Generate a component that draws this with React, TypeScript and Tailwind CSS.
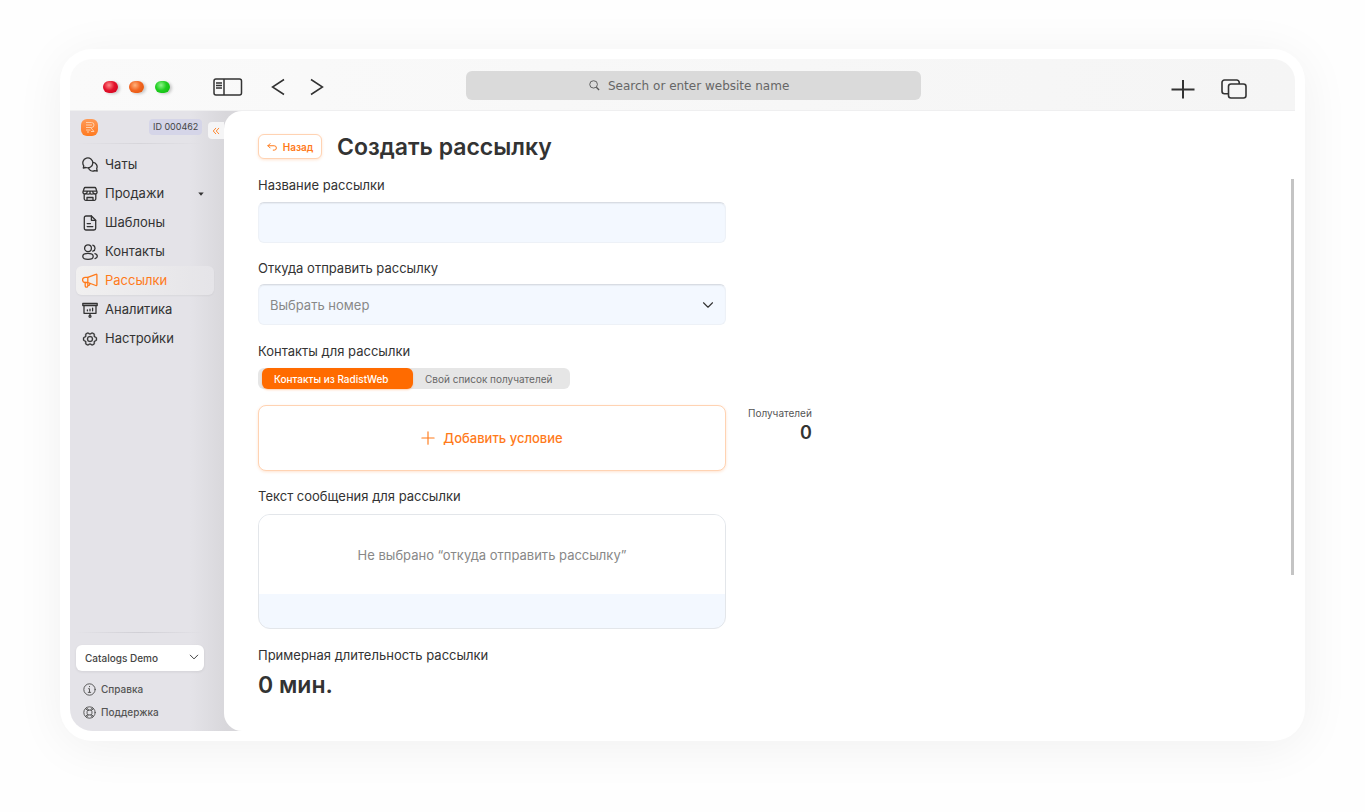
import type { ReactNode } from 'react'
import { PiGearSix } from 'react-icons/pi'

function classNames(...classes: (string | false)[]) {
  return classes.filter(Boolean).join(' ')
}

function Icon({ children, className = 'size-4', width = 1.5 }: { children: ReactNode; className?: string; width?: number }) {
  return (
    <svg
      viewBox="0 0 16 16"
      fill="none"
      stroke="currentColor"
      strokeWidth={width}
      strokeLinecap="round"
      strokeLinejoin="round"
      aria-hidden="true"
      className={classNames('shrink-0', className)}
    >
      {children}
    </svg>
  )
}

const navigation = [
  {
    name: 'Чаты',
    icon: (
      <Icon width={1.3}>
        <path d="M1.3 11l.5-2.200A5 5 0 1 1 4 10.500z" />
        <path d="M11.100 5.400a4.400 4.400 0 0 1 3.600 6.200l.5 2.600-2.500-.5a4.400 4.400 0 0 1-6.200-2.800" />
      </Icon>
    ),
  },
  {
    name: 'Продажи',
    expandable: true,
    icon: (
      <Icon width={1.3}>
        <path d="M3.200 1.500h9.600a1 1 0 0 1 1 .8l1.300 3.800a2 2 0 0 1-3.500 1.200 2.300 2.300 0 0 1-3.600 0 2.300 2.300 0 0 1-3.600 0A2 2 0 0 1 .9 6.100l1.300-3.800a1 1 0 0 1 1-.8zM1.100 5.200h13.800M5.500 5.200l-.9 2M10.500 5.200l.9 2M8 5.200v2" />
        <path d="M2.200 8.400v4.400a1.500 1.500 0 0 0 1.500 1.500h8.600a1.500 1.500 0 0 0 1.500-1.500V8.400M5 14.300v-2.800h6v2.800" />
      </Icon>
    ),
  },
  {
    name: 'Шаблоны',
    icon: (
      <Icon width={1.3}>
        <path d="M9.400 1H4a1.700 1.700 0 0 0-1.700 1.700v10.600A1.700 1.700 0 0 0 4 15h8a1.700 1.700 0 0 0 1.700-1.700v-8z" />
        <path d="M9.400 1v4.300h4.300M5.200 8.600h3.200M5.200 11.600h5.600" />
      </Icon>
    ),
  },
  {
    name: 'Контакты',
    icon: (
      <Icon width={1.3}>
        <circle cx="6" cy="4.200" r="3.400" />
        <path d="M.8 12.400c0-2 2-3 5.200-3s5.200 1 5.200 3-2 2.900-5.200 2.900-5.200-.9-5.200-2.900z" />
        <path d="M10.800 1.100a3.200 3.200 0 0 1 0 6.100M12.900 9.700c1.600.400 2.400 1.300 2.400 2.500s-.9 2-2.300 2.400" />
      </Icon>
    ),
  },
  {
    name: 'Рассылки',
    current: true,
    icon: (
      <Icon width={1.3}>
        <path d="M5.800 4.300H3.200a2.600 2.600 0 0 0 0 5.200h2.600l8 3a.8.8 0 0 0 1.100-.8V2.100a.8.8 0 0 0-1.100-.8z" />
        <path d="M5.800 4.300v8.600a1.300 1.300 0 0 1-2.600 0V9.500M5.800 12.200a1.500 1.500 0 0 0 2-1.900" />
      </Icon>
    ),
  },
  {
    name: 'Аналитика',
    icon: (
      <Icon width={1.3}>
        <path d="M.8 1.500h14.400v2H.8zM2 3.500v7.800h12V3.500M8 11.300v2" />
        <path d="M5.400 8.800v-.8M8 8.800V7.200M10.600 8.800V6.200" />
        <circle cx="8" cy="14.300" r="1" />
      </Icon>
    ),
  },
  {
    name: 'Настройки',
    icon: <PiGearSix className="size-4 shrink-0" stroke="currentColor" strokeWidth={5} aria-hidden="true" />,
  },
]

const lights = [
  { label: 'Close', color: 'bg-[radial-gradient(circle_at_40%_35%,#ff8a8a,#e3122b_45%,#c9001c)]' },
  { label: 'Minimize', color: 'bg-[radial-gradient(circle_at_40%_35%,#ffb27d,#f26522_45%,#dd5206)]' },
  { label: 'Maximize', color: 'bg-[radial-gradient(circle_at_40%_35%,#8df48a,#1fce1f_45%,#0cb30c)]' },
]

function Toolbar() {
  return (
    <header className="flex h-[52px] items-center border-b border-[#efeff0] bg-linear-to-r from-[#fafafa] to-[#f5f5f5] pt-1 pr-12 pl-[33px] text-[#333]">
      <div className="flex gap-[11px]">
        {lights.map((light) => (
          <button
            key={light.label}
            type="button"
            aria-label={light.label}
            className={classNames('h-3 w-[15px] rounded-full shadow-[2px_1px_3px_rgba(0,0,0,0.2)]', light.color)}
          />
        ))}
      </div>
      <button type="button" aria-label="Sidebar" className="ml-[43px]">
        <svg viewBox="0 0 30 18" fill="none" stroke="currentColor" strokeWidth="1.500" className="h-[18px] w-[30px]">
          <rect x="1" y="1" width="27.500" height="16" rx="2" />
          <path d="M11 1v16M3 5h6M3 7.500h6M3 10h6" />
        </svg>
      </button>
      <button type="button" aria-label="Back" className="ml-7">
        <svg viewBox="0 0 14 18" fill="none" stroke="currentColor" strokeWidth="1.500" className="h-[18px] w-3.5">
          <path d="M13 1.500 1.500 9 13 16.500" />
        </svg>
      </button>
      <button type="button" aria-label="Forward" className="ml-[25px]">
        <svg viewBox="0 0 14 18" fill="none" stroke="currentColor" strokeWidth="1.500" className="h-[18px] w-3.5">
          <path d="M1 1.500 12.500 9 1 16.500" />
        </svg>
      </button>
      <label className="mr-[250px] mb-0.5 ml-[142px] flex h-[29px] flex-1 items-center justify-center gap-2 rounded-md bg-[#dadada] text-[#555]">
        <svg viewBox="0 0 12 12" fill="none" stroke="currentColor" className="size-[11px]">
          <ellipse cx="5" cy="4.800" rx="4.200" ry="4" />
          <path d="m8 8 3 2.800" strokeWidth="1.500" />
        </svg>
        <input
          type="text"
          aria-label="Address"
          placeholder="Search or enter website name"
          className="w-[190px] bg-transparent font-['DejaVu_Sans',sans-serif] text-[12px] outline-none placeholder:text-[#666]"
        />
      </label>
      <div className="flex items-center gap-[26px] pt-1">
        <button type="button" aria-label="New tab">
          <svg viewBox="0 0 24 20" fill="none" stroke="currentColor" strokeWidth="2" className="h-5 w-6">
            <path d="M.5 10.500h23M12 1v18.500" />
          </svg>
        </button>
        <button type="button" aria-label="Tabs">
          <svg viewBox="0 0 26 20" fill="none" stroke="currentColor" strokeWidth="1.600" className="h-5 w-[26px]">
            <rect x="7.500" y="5" width="17.500" height="14" rx="2.500" />
            <path d="M7 14.800H3.500A2.500 2.500 0 0 1 1 12.300V3.500A2.500 2.500 0 0 1 3.500 1h12.200A2.500 2.500 0 0 1 18.200 3.500V5" />
          </svg>
        </button>
      </div>
    </header>
  )
}

function Sidebar() {
  return (
    <aside className="-mr-[18px] flex w-[172px] shrink-0 flex-col bg-[linear-gradient(to_right,#e4e3e8_120px,#d8d7db_156px)] pr-[18px]">
      <div className="flex h-8 items-center pl-[11px]">
        <a href="#" aria-label="Radist" className="flex size-[17px] shrink-0 items-center justify-center rounded-md bg-linear-to-b from-[#ff9a55] to-[#ff7a1c]">
          <svg viewBox="0 0 12 12" fill="none" stroke="#ffd0ab" className="size-3">
            <path d="M2 1.500h5.500a2.500 2.500 0 0 1 0 5H2M2 4h6M2 9h4.500M3 11h2M7 7l3 3.500H7" />
          </svg>
        </a>
        <span className="ml-[51px] rounded-sm bg-[#d5d5e8] px-1 text-[9px] leading-4 whitespace-nowrap text-[#444]">ID 000462</span>
        <button
          type="button"
          aria-label="Свернуть"
          className="mt-[7px] ml-auto flex h-[17px] w-4 shrink-0 items-center justify-center rounded-l-sm bg-[#f5f5f6] text-[#ff7a1a]"
        >
          <Icon className="size-2" width={1.8}>
            <path d="M7.500 2.500 2.500 8l5 5.500M13.500 2.500 8.500 8l5 5.500" />
          </Icon>
        </button>
      </div>
      <div className="mr-5 ml-1.5 h-px bg-linear-to-r from-transparent via-[#d6d5da] to-transparent" />

      <nav className="mt-1.5 mr-2.5 ml-1.5">
        {navigation.map((item) => (
          <a
            key={item.name}
            href="#"
            aria-current={item.current ? 'page' : undefined}
            className={classNames(
              'flex h-[29px] items-center gap-[7px] rounded-md pr-2.5 pl-1.5 text-[13px]',
              item.current
                ? 'bg-linear-to-r from-[#f1f0f0] to-[#e5e4e8] text-[#ff7a1a] shadow-[0_1px_2px_rgba(0,0,0,0.05)]'
                : 'text-[#333]',
            )}
          >
            {item.icon}
            {item.name}
            {item.expandable && (
              <svg viewBox="0 0 6 4" fill="currentColor" aria-hidden="true" className="ml-auto h-1 w-1.5">
                <path d="M.3.500h5.400L3 3.700z" />
              </svg>
            )}
          </a>
        ))}
      </nav>

      <div className="mt-auto mr-5 ml-1.5 h-px bg-linear-to-r from-transparent via-[#d0cfd5] to-transparent" />
      <div className="relative mt-[11px] mr-5 ml-1.5">
        <select
          aria-label="Компания"
          className="h-[26px] w-full appearance-none rounded-md bg-white pr-6 pl-[9px] text-[10px] font-medium text-[#444] shadow-[0_1px_3px_rgba(0,0,0,0.08)]"
        >
          <option>Catalogs Demo</option>
        </select>
        <Icon className="pointer-events-none absolute top-2 right-[5px] size-2.5">
          <path d="m2 5 6 6 6-6" />
        </Icon>
      </div>
      <div className="mt-[7px] mb-[7px] ml-[13px] text-[10px] font-medium text-[#555]">
        <a href="#" className="flex h-[23px] items-center gap-[5px]">
          <Icon className="size-[13px]" width={1.2}>
            <circle cx="8" cy="8" r="7" />
            <path d="M6.800 7H8v4.500M6.500 11.500h3M8 4.200v.4" />
          </Icon>
          Справка
        </a>
        <a href="#" className="flex h-[23px] items-center gap-[5px]">
          <Icon className="size-[13px]" width={1.2}>
            <circle cx="8" cy="8" r="7" />
            <rect x="5" y="5" width="6" height="6" rx="2" />
            <path d="M5.500 5.500 3 3M6.500 5 4.500 2M10.500 5.500 13 3M9.500 5l2-3M5.500 10.500 3 13M6.500 11l-2 3M10.500 10.500 13 13M9.500 11l2 3" />
          </Icon>
          Поддержка
        </a>
      </div>
    </aside>
  )
}

export default function App() {
  return (
    <div className="min-h-screen bg-[#fefefe] px-[60px] pt-[49px] pb-[71px] font-['Inter',sans-serif] text-[#333]">
      <div className="rounded-[32px] bg-white p-2.5 shadow-[0_6px_50px_rgba(0,0,0,0.06)]">
        <div className="overflow-hidden rounded-[22px]">
          <Toolbar />
          <div className="flex">
            <Sidebar />
            <main className="relative flex flex-1 rounded-l-[18px] bg-white">
              <form className="flex-1 pt-[23px] pb-8 pl-[34px] text-[13px] leading-5">
                <div className="flex items-center gap-[15px]">
                  <button
                    type="button"
                    className="flex h-[25px] w-16 items-center justify-center gap-1.5 rounded-md border border-[#ffd3b3] bg-white text-[10px] font-semibold text-[#ff7a1a] shadow-[0_1px_3px_rgba(255,122,26,0.2)]"
                  >
                    <Icon className="size-2.5" width={1.6}>
                      <path d="M5 2.500 1.500 6 5 9.500M1.500 6h10a3.200 3.200 0 0 1 0 7H10" />
                    </Icon>
                    Назад
                  </button>
                  <h1 className="text-[23px] leading-6 font-semibold">Создать рассылку</h1>
                </div>

                <label htmlFor="name" className="mt-4 block">Название рассылки</label>
                <input
                  id="name"
                  type="text"
                  className="mt-[7px] h-[41px] w-[468px] rounded-md border border-[#edf1f7] border-t-[#d8dce3] bg-[#f3f8ff] px-3 shadow-[inset_0_1px_1px_rgba(0,0,0,0.05)] outline-none"
                />

                <label htmlFor="source" className="mt-[15px] block">Откуда отправить рассылку</label>
                <div className="relative mt-1.5 w-[468px]">
                  <select
                    id="source"
                    className="h-[41px] w-full appearance-none rounded-md border border-[#edf1f7] border-t-[#d8dce3] bg-[#f3f8ff] px-[11px] text-[#888] shadow-[inset_0_1px_1px_rgba(0,0,0,0.05)] outline-none"
                  >
                    <option>Выбрать номер</option>
                  </select>
                  <Icon className="pointer-events-none absolute top-[15px] right-3 size-3">
                    <path d="m2 5 6 6 6-6" />
                  </Icon>
                </div>

                <p className="mt-4">Контакты для рассылки</p>
                <div className="mt-[7px] flex h-[21px] w-[312px] rounded-md bg-[#e6e6e6] pl-1 text-[10px]">
                  <button
                    type="button"
                    aria-pressed="true"
                    className="w-[151px] rounded-md bg-[#ff6b00] px-3 text-left font-medium text-white shadow-[0_1px_2px_rgba(255,107,0,0.3)]"
                  >
                    Контакты из RadistWeb
                  </button>
                  <button type="button" aria-pressed="false" className="px-3 text-[#666]">
                    Свой список получателей
                  </button>
                </div>

                <div className="mt-4 flex gap-[22px]">
                  <button
                    type="button"
                    className="flex h-[66px] w-[468px] items-center justify-center gap-2 rounded-lg border border-[#ffd3b3] bg-white font-medium text-[#ff7a1a] shadow-[0_1px_3px_rgba(255,122,26,0.2)]"
                  >
                    <Icon className="size-3.5" width={1.3}>
                      <path d="M8 1v14M1 8h14" />
                    </Icon>
                    Добавить условие
                  </button>
                  <div className="text-right">
                    <div className="text-[10px] leading-4 text-[#555]">Получателей</div>
                    <div className="text-lg leading-6 font-semibold">0</div>
                  </div>
                </div>

                <p className="mt-[15px]">Текст сообщения для рассылки</p>
                <div className="mt-2 h-[115px] w-[468px] overflow-hidden rounded-xl border border-[#e3e6ea] bg-[#f3f8ff]">
                  <div className="flex h-[79px] items-center justify-center bg-white text-[#888]">
                    Не выбрано “откуда отправить рассылку”
                  </div>
                </div>

                <p className="mt-4">Примерная длительность рассылки</p>
                <p className="mt-1.5 text-[23px] leading-7 font-semibold">0 мин.</p>
              </form>
              <div className="mt-[68px] mr-px h-[396px] w-[3px] bg-[#c4c4c4]" />
            </main>
          </div>
        </div>
      </div>
    </div>
  )
}
